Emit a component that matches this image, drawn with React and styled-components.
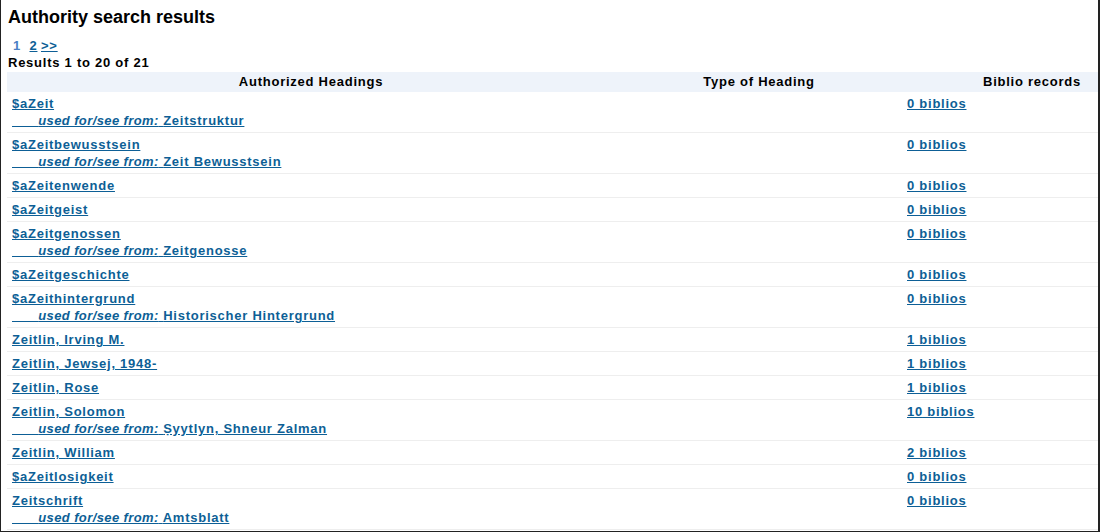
import React from 'react';
import styled, { createGlobalStyle } from 'styled-components';

const GlobalStyle = createGlobalStyle`
  html, body {
    margin: 0;
    padding: 0;
    background: #fff;
  }
  body {
    font-family: "Liberation Sans", Arial, sans-serif;
    font-size: 13px;
  }
`;

const Page = styled.div`
  box-sizing: border-box;
  width: 1100px;
  height: 532px;
  border: 1px solid #222;
  border-top: none;
  border-right-width: 2px;
  padding: 0 0 0 6px;
  overflow: hidden;
`;

const Title = styled.h1`
  margin: 0;
  padding: 6px 0 0 1px;
  font-size: 18px;
  line-height: 22px;
  font-weight: bold;
  color: #000;
`;

const Pager = styled.div`
  display: flex;
  gap: 3.5px;
  padding: 10px 0 0 6px;
  font-weight: bold;
  line-height: 16px;
  letter-spacing: 0.75px;
`;

const PageLink = styled.a`
  color: ${(p) => (p.$current ? '#4a80c4' : '#0d5f96')};
  text-decoration: ${(p) => (p.$current ? 'none' : 'underline')};
  margin-right: ${(p) => (p.$current ? '5px' : '0')};
  cursor: pointer;
`;

const Summary = styled.div`
  margin-top: 2px;
  font-weight: bold;
  line-height: 14px;
  color: #000;
  padding-left: 1px;
  letter-spacing: 0.75px;
`;

const Table = styled.div`
  display: grid;
  grid-template-columns: 608px 288px 258px;
  width: 1154px;
  margin-top: 2px;
  letter-spacing: 0.75px;
`;

const HeadCell = styled.div`
  background: #eef3fa;
  text-align: center;
  font-weight: bold;
  color: #000;
  padding: 2px 5px;
  line-height: 16px;
`;

const Cell = styled.div`
  padding: 3px 4px 3px ${(p) => (p.$first ? '5px' : '4px')};
  border-bottom: 1px solid #eeeeee;
  line-height: 17px;
  font-weight: bold;
`;

const Link = styled.a`
  display: block;
  width: fit-content;
  color: #0d5f96;
  text-decoration: underline;
  cursor: pointer;
`;

const SeeFrom = styled.em`
  font-style: italic;
  letter-spacing: 0.4px;
`;

const rows = [
  { heading: '$aZeit', see: 'Zeitstruktur', count: 0 },
  { heading: '$aZeitbewusstsein', see: 'Zeit Bewusstsein', count: 0 },
  { heading: '$aZeitenwende', count: 0 },
  { heading: '$aZeitgeist', count: 0 },
  { heading: '$aZeitgenossen', see: 'Zeitgenosse', count: 0 },
  { heading: '$aZeitgeschichte', count: 0 },
  { heading: '$aZeithintergrund', see: 'Historischer Hintergrund', count: 0 },
  { heading: 'Zeitlin, Irving M.', count: 1 },
  { heading: 'Zeitlin, Jewsej, 1948-', count: 1 },
  { heading: 'Zeitlin, Rose', count: 1 },
  { heading: 'Zeitlin, Solomon', see: 'Ṣyytlyn, Shneur Zalman', count: 10 },
  { heading: 'Zeitlin, William', count: 2 },
  { heading: '$aZeitlosigkeit', count: 0 },
  { heading: 'Zeitschrift', see: 'Amtsblatt', count: 0 },
];

const App = () => (
  <>
    <GlobalStyle />
    <Page>
      <Title>Authority search results</Title>
      <Pager>
        <PageLink $current>1</PageLink>
        <PageLink>2</PageLink>
        <PageLink>&gt;&gt;</PageLink>
      </Pager>
      <Summary>Results 1 to 20 of 21</Summary>
      <Table>
        <HeadCell>Authorized Headings</HeadCell>
        <HeadCell>Type of Heading</HeadCell>
        <HeadCell>Biblio records</HeadCell>
        {rows.map((r) => (
          <React.Fragment key={r.heading}>
            <Cell $first>
              <Link>{r.heading}</Link>
              {r.see && (
                <Link>
                  {'\u00a0\u00a0\u00a0\u00a0\u00a0\u00a0'}
                  <SeeFrom>used for/see from:</SeeFrom> {r.see}
                </Link>
              )}
            </Cell>
            <Cell />
            <Cell>
              <Link>{r.count} biblios</Link>
            </Cell>
          </React.Fragment>
        ))}
      </Table>
    </Page>
  </>
);

export default App;
